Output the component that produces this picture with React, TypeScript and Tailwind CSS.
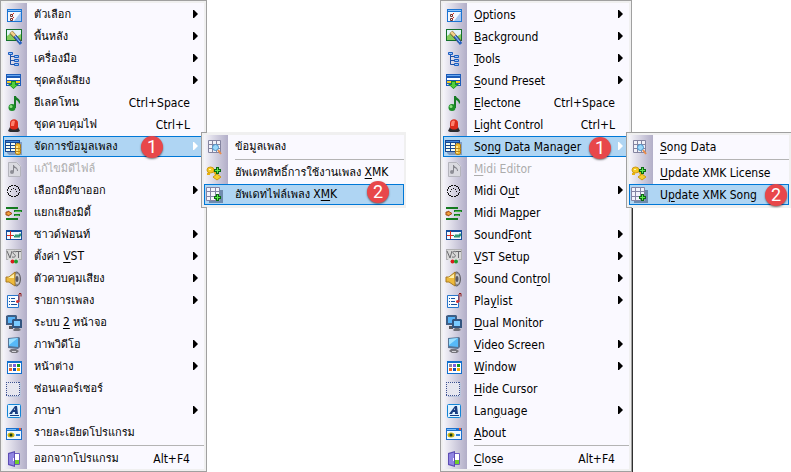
import type { ReactNode } from "react";

const plus = (x: number, y: number) => (
  <g transform={`translate(${x} ${y})`}>
    <path d="M2 0h3v2h2v3h-2v2h-3v-2h-2v-3h2z" fill="#0a6a12" />
    <path d="M3 1h1v2h2v1h-2v2h-1v-2h-2v-1h2z" fill="#5fe84e" />
  </g>
);

const glyphs: Record<string, ReactNode> = {
  options: (
    <>
      <path d="M2 3h15v13h-15z" fill="#1b74d2" />
      <path d="M3 4h13v1h-13z" fill="#8cc4fa" />
      <path d="M3 6h13v9h-13z" fill="#f2f6fc" />
      <path d="M16 6v9h-7z" fill="#a9c8f2" />
      <path d="M5.500 8.500h2v2h-2zM5.500 12.500h2v2h-2z" fill="#fff" stroke="#6a3430" />
      <path d="M7 9l2-2M7 13l2-2" fill="none" stroke="#d32a1c" />
    </>
  ),
  background: (
    <>
      <path d="M1 1h16v12h-16z" fill="#13702c" />
      <path d="M2 2h14v10h-14z" fill="#e4f3fb" />
      <path d="M2 8l4-3 5 4 5-3v6h-14z" fill="#86cc5e" />
      <path d="M6 4l9 10" stroke="#5c4428" strokeWidth="4" />
      <path d="M6 4l4 4" stroke="#f2d088" strokeWidth="3" />
      <path d="M10 8l6 8" stroke="#2560c0" strokeWidth="3" />
      <path d="M10 8l5 6" stroke="#a8d4fa" />
    </>
  ),
  tools: (
    <>
      <path d="M5.500 5v9.500h4M5.500 6.500h4M5.500 10.500h4" fill="none" stroke="#1c4fa4" />
      <path d="M3.500 2.500h4v2h-4zM9.500 5.500h4v2h-4zM9.500 9.500h4v2h-4zM9.500 13.500h4v2h-4z" fill="#9ac8fb" stroke="#1c5dc0" />
    </>
  ),
  preset: (
    <>
      <path d="M1 2h15v12h-15z" fill="#1d5cb8" />
      <path d="M2 3h13v1h-13z" fill="#69a9f0" />
      <path d="M2 6h13v2h-13z" fill="#fff" />
      <path d="M2 9h13v2h-13z" fill="#f6cb24" />
      <path d="M2 12h13v1h-13z" fill="#dfe6f3" />
      <path d="M6 9h5v3h3l-5.500 5-5.500-5h3z" fill="#1c8f20" />
      <path d="M7 10h3v3h2l-3.500 3-3.500-3h2z" fill="#54cf3d" />
    </>
  ),
  note: (
    <>
      <path d="M9 2h2c0 2 5 3 4 7l-1 1c0-2-1-3-3-4v8h-2z" fill="#167a24" />
      <circle cx="7" cy="13.500" r="3.500" fill="#1c8f28" />
      <circle cx="6" cy="12.500" r="1.500" fill="#8fe27c" />
    </>
  ),
  light: (
    <>
      <path d="M3 15l2-4h8l2 4-2 1h-8z" fill="#2b2b2f" />
      <path d="M5 12v-5c0-5 8-5 8 0v5c-2 2-6 2-8 0z" fill="#dc2b1c" />
      <path d="M6 8c0-4 3-4 4-3l-1 5h-3z" fill="#ff806c" />
    </>
  ),
  database: (
    <>
      <path d="M2 4h15v13h-13l-2-2z" fill="#7f9dc4" />
      <path d="M0 2h15v12h-15z" fill="#17468f" />
      <path d="M1 5h4v2h-4zM6 5h4v2h-4zM11 5h3v2h-3zM1 8h4v2h-4zM6 8h4v2h-4zM1 11h4v2h-4zM6 11h4v2h-4z" fill="#f4fdf2" />
      <path d="M1 3h13v1h-13z" fill="#3d83d8" />
      <path d="M10.500 7c0-2 5-2 5 0v8c0 2-5 2-5 0z" fill="#f2bd34" stroke="#a87818" />
      <path d="M11 8h2v7h-2z" fill="#ffe78e" />
      <path d="M11 10.500h5M11 13.500h5" stroke="#b88820" />
    </>
  ),
  editor: (
    <>
      <path d="M3 2h9l4 4v11h-13z" fill="#dadae0" />
      <path d="M3.500 16.500v-14h8l4 4v10z" fill="none" stroke="#b4b4bc" />
      <path d="M8 5h1c0 2 4 2 4 6h-1c0-2-1-3-3-3v4h-1z" fill="#84848c" />
      <circle cx="7" cy="12" r="2" fill="#8e8e96" />
    </>
  ),
  midi: (
    <g shapeRendering="crispEdges" fill="#111">
      <path d="M6 3h2v1h-2zM9 3h2v1h-2zM4 4h2v1h-2zM11 4h2v1h-2zM3 5h1v2h-1zM13 5h1v2h-1zM2 7h1v2h-1zM14 7h1v2h-1zM2 10h1v1h-1zM14 10h1v1h-1zM3 11h1v2h-1zM13 11h1v2h-1zM4 13h2v1h-2zM11 13h2v1h-2zM6 14h2v1h-2zM9 14h2v1h-2z" />
      <path d="M5 9h1v1h-1zM6 7h1v1h-1zM8 6h1v1h-1zM10 7h1v1h-1zM11 9h1v1h-1z" />
    </g>
  ),
  mapper: (
    <>
      <path d="M1 3h12v2h-12zM9 6h8v2h-8zM9 10h6v2h-6zM1 14h12v2h-12z" fill="#147a20" />
      <path d="M10 7h6v1h-6zM10 11h4v1h-4z" fill="#4fbb4a" />
      <path d="M1 8h2v-1l4 2.500-4 2.500v-1h-2z" fill="#f0a13c" stroke="#a04a14" />
    </>
  ),
  wave: (
    <>
      <path d="M1 4h16v10h-16z" fill="#174f9c" />
      <path d="M2 6h14v7h-14z" fill="#f4faff" />
      <path d="M2 9.500h6" stroke="#e02a1c" />
      <path d="M5.500 5v8" stroke="#e02a1c" />
      <path d="M8 9.500h1l1 2 1-3 1 3 1-3 1 3 1-4 1 3" fill="none" stroke="#178a62" />
    </>
  ),
  vst: (
    <>
      <path d="M1 1h16v11h-16z" fill="#b0b0b2" />
      <path d="M2 2h14v9h-14z" fill="#d8d8d8" />
      <path d="M2 3l3 7 2-7M11 4c-3-2-4 1-2 2s2 4-2 3M11 3.500h5M13.500 4v6" fill="none" stroke="#6a6a6e" />
      <path d="M3 11h11l-2 4h-7z" fill="#e4e4e6" />
      <circle cx="7.500" cy="13.500" r="2" fill="#d81e1e" />
      <circle cx="11" cy="13.500" r="2" fill="#1e9a2c" />
    </>
  ),
  speaker: (
    <>
      <ellipse cx="11.500" cy="9" rx="4" ry="7" fill="#8c8c92" stroke="#606066" />
      <ellipse cx="12" cy="9" rx="2.500" ry="5" fill="#c8c8cf" />
      <path d="M1 7h3l6-5v14l-6-4h-3z" fill="#edba3c" stroke="#a87a24" />
      <path d="M3 8l6-4v4z" fill="#fff0a8" />
      <ellipse cx="12" cy="9" rx="1.500" ry="3" fill="#5a5a62" />
    </>
  ),
  playlist: (
    <>
      <path d="M2.500 3.500h11v12h-11z" fill="#f6fbff" stroke="#2877cc" />
      <path d="M4 6.500h1M4 9.500h1M4 12.500h1M6 6.500h4M6 9.500h4M6 12.500h6" stroke="#174f9c" />
      <path d="M14 1.500h2v3" fill="none" stroke="#8a1616" />
      <path d="M14 2v8" stroke="#a81c1c" />
      <circle cx="12.500" cy="9.500" r="1.500" fill="#d53030" />
    </>
  ),
  dual: (
    <>
      <path d="M1 2l2-1h8l1 1v9h-11z" fill="#3f5f86" />
      <path d="M3 3h7v6h-7z" fill="#58b4f8" />
      <path d="M4 12h4v3h-4z" fill="#58585e" />
      <path d="M7 6l1-1h8l1 1v8h-10z" fill="#32557f" />
      <path d="M9 7h6v5h-6z" fill="#7acbff" />
      <path d="M10 14h4l2 2-2 1h-5l-1-1z" fill="#707078" />
    </>
  ),
  monitor: (
    <>
      <path d="M3 2l11-1 1 1v9l-2 2-10-1z" fill="#587494" />
      <path d="M4 3l9-1v9l-9-1z" fill="#56b9f8" />
      <path d="M4 3l9-1-9 7z" fill="#9ce0ff" />
      <path d="M6 13h5l3 2-2 2h-5l-3-2z" fill="#75757c" />
      <path d="M7 15h4v1h-4z" fill="#d4d4da" />
    </>
  ),
  window: (
    <>
      <path d="M2 3h15v13h-15z" fill="#1270ce" />
      <path d="M3 5h13v10h-13z" fill="#fff" />
      <path d="M4 6h3v3h-3z" fill="#8a8aa8" />
      <path d="M8 6h3v3h-3z" fill="#7c5ce0" />
      <path d="M12 6h3v3h-3z" fill="#149a28" />
      <path d="M4 10h3v3h-3z" fill="#f0662c" />
      <path d="M8 10h3v3h-3z" fill="#0c50b8" />
      <path d="M12 10h3v3h-3z" fill="#f0a808" />
    </>
  ),
  hide: (
    <>
      <path d="M3 3h13v14h-13z" fill="#b8c4dc" />
      <path d="M1 2h14v14h-14z" fill="#e6e6ef" />
      <path d="M1 2.500h14M1 15.500h14M1.500 2v14M14.500 2v14" fill="none" stroke="#3c5090" strokeDasharray="1 1" />
    </>
  ),
  language: (
    <>
      <rect x="2.500" y="2.500" width="13" height="13" rx="1" fill="#e0f2ff" stroke="#1285d6" />
      <path d="M4 12l6-8h2l1 8h-3v-2h-2l-1 2zM9 8h1v-2z" fill="#183c80" fillRule="evenodd" />
      <path d="M5 13.500h9" stroke="#183c80" />
    </>
  ),
  about: (
    <>
      <path d="M1 4h16v12h-16z" fill="#1b70cc" />
      <path d="M2 5h9v1h-9z" fill="#7cbcf8" />
      <path d="M14 4h2v2h-2z" fill="#e8542c" />
      <path d="M2 7h14v8h-14z" fill="#f0f8ff" />
      <ellipse cx="6" cy="11" rx="3.500" ry="2.500" fill="#c8b414" />
      <circle cx="6" cy="11" r="1.500" fill="#143c1c" />
      <path d="M11 10h4v2h-4z" fill="#2680d8" />
    </>
  ),
  close: (
    <>
      <path d="M9.500 3.500h5v11h-5z" fill="#fff" stroke="#6c5cc0" />
      <path d="M10 10h4v4h-4z" fill="#70cf28" />
      <path d="M3 3l7-2v16l-7-2z" fill="#5c4cb4" />
      <path d="M4 4l5-1.500v13l-5-1.500z" fill="#8f84e2" />
      <path d="M8 8h1v3h-1z" fill="#f2eaff" />
    </>
  ),
  search: (
    <>
      <path d="M2 3h13v12h-13z" fill="#f1f1f8" />
      <path d="M2.500 2.500h12v12h-12zM2 6.500h13M2 10.500h13M6.500 2v13M10.500 2v13" fill="none" stroke="#8484a0" />
      <circle cx="9.500" cy="9.500" r="3" fill="#9ad8fa" stroke="#4a90c8" />
      <path d="M12 12l3 4" stroke="#e88c4c" strokeWidth="2" />
    </>
  ),
  license: (
    <>
      <path d="M5 6c3-1 5 3 7 8" fill="none" stroke="#e2ae18" strokeWidth="3" />
      <ellipse cx="4.500" cy="6" rx="3.500" ry="3" fill="#f4c924" stroke="#d09c14" />
      <path d="M1 9h3v2h-3z" fill="#e6b010" />
      <path d="M7 13l4-3 4 3-4 3z" fill="#f5cf30" stroke="#cc9a14" />
      <path d="M3 5h2v1h-2z" fill="#fff4b0" />
      {plus(8, 3)}
    </>
  ),
  song: (
    <>
      <path d="M3 4h14v13h-14z" fill="#6e8bae" />
      <path d="M1 2h13v13h-13z" fill="#f3f3fb" />
      <path d="M0.500 1.500h13v13h-13zM0 5.500h14M0 10.500h14M4.500 1v14M9.500 1v14" fill="none" stroke="#8484a4" />
      {plus(8, 8)}
    </>
  ),
};

type Entry = { icon: string; label: ReactNode; keys?: string; more?: boolean; active?: boolean; off?: boolean };

const L = ({ children }: { children: ReactNode }) => <span className="text-xs">{children}</span>;
const U = ({ children }: { children: ReactNode }) => <u className="text-xs underline-offset-2">{children}</u>;

function Item({ icon, label, keys, more, active, off, thai }: Entry & { thai: boolean }) {
  return (
    <li className="h-[22px] pt-px">
      <button
        type="button"
        disabled={off}
        className={`flex h-[21px] w-full items-center text-left ${active ? "bg-[#afd5f3] outline outline-1 -outline-offset-1 outline-[#0078d7]" : ""} ${off ? "text-[#acacac]" : "text-black"}`}
      >
        <span className="w-[31px] shrink-0 pl-0.5">
          <svg viewBox="0 0 18 18" className="size-[18px]" aria-hidden="true">{glyphs[icon]}</svg>
        </span>
        <span className={`grow whitespace-nowrap leading-5 ${thai ? "text-[11px]" : "text-xs"}`}>{label}</span>
        {keys && <span className="pr-3.5 text-xs leading-5">{keys}</span>}
        {more && (
          <svg viewBox="0 0 5 8" className={`mr-1.5 mb-0.5 h-2 w-[5px] ${active ? "fill-white" : "fill-black"}`} aria-hidden="true">
            <path d="M0 0h1l4 4-4 4h-1z" />
          </svg>
        )}
      </button>
    </li>
  );
}

const Divider = () => <li role="separator" className="ml-[31px] h-1 pt-0.5"><div className="h-px bg-[#b4b4b4]" /></li>;

function List({ items, split, thai }: { items: Entry[]; split: number; thai: boolean }) {
  return (
    <ul className="bg-[#faf9ff] bg-linear-to-r from-[#f6f5fa] to-[#b2aec8] bg-[length:24px_100%] bg-no-repeat">
      {items.slice(0, split).map((e, i) => <Item key={i} {...e} thai={thai} />)}
      <Divider />
      {items.slice(split).map((e, i) => <Item key={i} {...e} thai={thai} />)}
    </ul>
  );
}

const Badge = ({ n, place }: { n: number; place: string }) => (
  <span className={`absolute z-20 flex size-[22px] items-center justify-center rounded-full bg-[#e8474a] font-[Roboto,sans-serif] text-lg leading-none text-white shadow-[0_1px_2px_#0008] ${place}`}>
    {n}
  </span>
);

const thaiMain: Entry[] = [
  { icon: "options", label: "ตัวเลือก", more: true },
  { icon: "background", label: "พื้นหลัง", more: true },
  { icon: "tools", label: "เครื่องมือ", more: true },
  { icon: "preset", label: "ชุดคลังเสียง", more: true },
  { icon: "note", label: "อีเลคโทน", keys: "Ctrl+Space" },
  { icon: "light", label: "ชุดควบคุมไฟ", keys: "Ctrl+L" },
  { icon: "database", label: "จัดการข้อมูลเพลง", more: true, active: true },
  { icon: "editor", label: "แก้ไขมิดีไฟล์", off: true },
  { icon: "midi", label: "เลือกมิดีขาออก", more: true },
  { icon: "mapper", label: "แยกเสียงมิดี้" },
  { icon: "wave", label: "ซาวด์ฟอนท์", more: true },
  { icon: "vst", label: <>ตั้งค่า <U>V</U><L>ST</L></>, more: true },
  { icon: "speaker", label: "ตัวควบคุมเสียง", more: true },
  { icon: "playlist", label: "รายการเพลง", more: true },
  { icon: "dual", label: <>ระบบ <U>2</U> หน้าจอ</> },
  { icon: "monitor", label: "ภาพวิดีโอ", more: true },
  { icon: "window", label: "หน้าต่าง", more: true },
  { icon: "hide", label: "ซ่อนเคอร์เซอร์" },
  { icon: "language", label: "ภาษา", more: true },
  { icon: "about", label: "รายละเอียดโปรแกรม" },
  { icon: "close", label: "ออกจากโปรแกรม", keys: "Alt+F4" },
];

const thaiSub: Entry[] = [
  { icon: "search", label: "ข้อมูลเพลง" },
  { icon: "license", label: <>อัพเดทสิทธิ์การใช้งานเพลง <U>X</U><L>MK</L></> },
  { icon: "song", label: <>อัพเดทไฟล์เพลง <L>X</L><U>M</U><L>K</L></>, active: true },
];

const englishMain: Entry[] = [
  { icon: "options", label: <><U>O</U>ptions</>, more: true },
  { icon: "background", label: <><U>B</U>ackground</>, more: true },
  { icon: "tools", label: <><U>T</U>ools</>, more: true },
  { icon: "preset", label: <><U>S</U>ound Preset</>, more: true },
  { icon: "note", label: <><U>E</U>lectone</>, keys: "Ctrl+Space" },
  { icon: "light", label: <><U>L</U>ight Control</>, keys: "Ctrl+L" },
  { icon: "database", label: <>So<U>n</U>g Data Manager</>, more: true, active: true },
  { icon: "editor", label: <><U>M</U>idi Editor</>, off: true },
  { icon: "midi", label: <>Midi O<U>u</U>t</>, more: true },
  { icon: "mapper", label: <>Midi Ma<U>p</U>per</> },
  { icon: "wave", label: <>Sound<U>F</U>ont</>, more: true },
  { icon: "vst", label: <><U>V</U>ST Setup</>, more: true },
  { icon: "speaker", label: <>Sound Cont<U>r</U>ol</>, more: true },
  { icon: "playlist", label: <>Pla<U>y</U>list</>, more: true },
  { icon: "dual", label: <><U>D</U>ual Monitor</> },
  { icon: "monitor", label: <><U>V</U>ideo Screen</>, more: true },
  { icon: "window", label: <><U>W</U>indow</>, more: true },
  { icon: "hide", label: <><U>H</U>ide Cursor</> },
  { icon: "language", label: <>Lan<U>g</U>uage</>, more: true },
  { icon: "about", label: <><U>A</U>bout</> },
  { icon: "close", label: <><U>C</U>lose</>, keys: "Alt+F4" },
];

const englishSub: Entry[] = [
  { icon: "search", label: <><U>S</U>ong Data</> },
  { icon: "license", label: <><U>U</U>pdate XMK License</> },
  { icon: "song", label: <>U<U>p</U>date XMK Song</>, active: true },
];

export default function App() {
  return (
    <main className="flex items-start gap-[233px] overflow-hidden bg-white font-['DejaVu_Sans_Condensed','DejaVu_Sans',Loma,sans-serif]">
      <nav aria-label="เมนู" className="relative w-[207px] shrink-0 border border-[#a0a0a0] bg-[#f0f0f0] p-0.5">
        <List items={thaiMain} split={20} thai />
        <Badge n={1} place="left-[140px] top-[135px]" />
        <div className="absolute top-[131px] left-[200px] z-10 w-[205px] border-l border-[#a0a0a0] bg-[#f0f0f0] py-[3px] pr-0.5 pl-0.5">
          <div className="absolute top-0 left-0 h-px w-[5px] bg-[#a0a0a0]" />
          <div className="absolute bottom-0 left-0 h-px w-[5px] bg-[#a0a0a0]" />
          <List items={thaiSub} split={1} thai />
          <Badge n={2} place="left-[165px] top-[49px]" />
        </div>
      </nav>
      <nav aria-label="Menu" className="relative w-48 shrink-0 border border-[#a0a0a0] bg-[#f0f0f0] p-0.5">
        <List items={englishMain} split={20} thai={false} />
        <div className="absolute top-[207px] -right-0.5 -bottom-px w-px bg-[#303030]" />
        <Badge n={1} place="left-[148px] top-[136px]" />
        <div className="absolute top-[131px] left-[185px] z-10 w-[165px] border-t border-l border-[#a0a0a0] bg-[#f0f0f0] pt-0.5 pr-0.5 pb-[3px] pl-0.5">
          <div className="absolute bottom-0 left-0 h-px w-[5px] bg-[#a0a0a0]" />
          <List items={englishSub} split={1} thai={false} />
          <Badge n={2} place="left-[138px] top-[51px]" />
        </div>
      </nav>
    </main>
  );
}
